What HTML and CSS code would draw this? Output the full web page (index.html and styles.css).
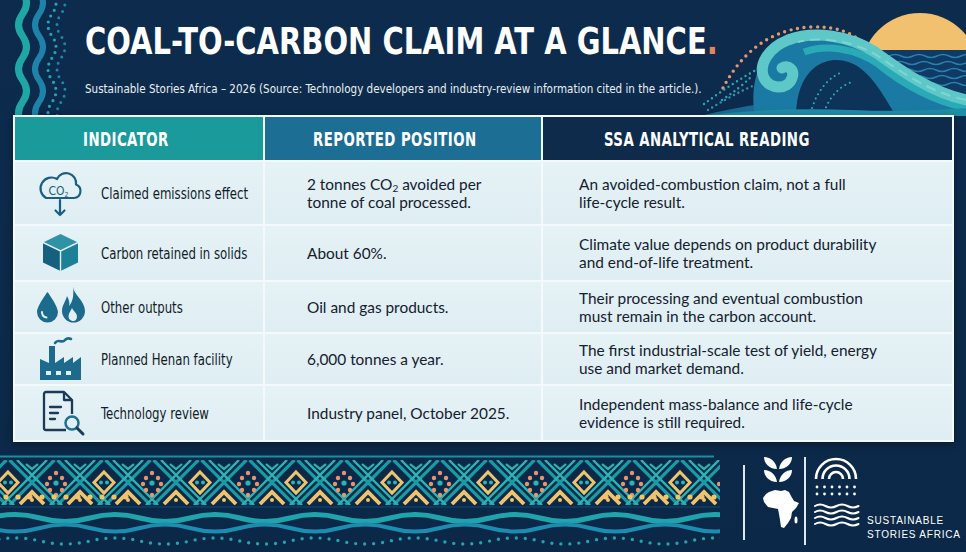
FILE: index.html
```html
<!DOCTYPE html>
<html lang="en">
<head>
<meta charset="utf-8">
<title>Coal-to-Carbon Claim at a Glance</title>
<link rel="stylesheet" href="styles.css">
</head>
<body>
<div class="page">
  <svg class="deco-left" width="75" height="116" viewBox="0 0 75 116">
    <g fill="none" stroke-linecap="round">
      <path d="M22.5 -8 Q30.5 3 22.5 14 T22.5 36 T22.5 58 T22.5 80 T22.5 102 T22.5 124" stroke="#1fa6a5" stroke-width="7"/>
      <path d="M39 -8 Q47 3 39 14 T39 36 T39 58 T39 80 T39 102 T39 124" stroke="#1f82a9" stroke-width="6"/>
      <path d="M52 -8 Q60 3 52 14 T52 36 T52 58 T52 80 T52 102 T52 124" stroke="#22a5b0" stroke-width="3.2" stroke-dasharray="0 6.5"/>
      <path d="M61 -8 Q69 3 61 14 T61 36 T61 58 T61 80 T61 102 T61 124" stroke="#1c87a8" stroke-width="3" stroke-dasharray="0 7"/>
    </g>
  </svg>

  <svg class="deco-wave" width="266" height="116" viewBox="0 0 266 116">
    <defs>
      <clipPath id="sky"><rect x="0" y="0" width="266" height="50"/></clipPath>
    </defs>
    <circle cx="220" cy="72" r="59" fill="#f2c170" clip-path="url(#sky)"/>
    <rect x="160" y="50" width="106" height="58" fill="#0f3a63"/>
    <g fill="none" stroke="#2a7fb0" stroke-width="1.4">
      <path d="M165 56 Q171 53 177 56 T189 56 T201 56 T213 56 T225 56 T237 56 T249 56 T261 56 T273 56"/>
      <path d="M170 63 Q176 60 182 63 T194 63 T206 63 T218 63 T230 63 T242 63 T254 63 T266 63"/>
      <path d="M176 70 Q182 67 188 70 T200 70 T212 70 T224 70 T236 70 T248 70 T260 70 T272 70"/>
      <path d="M188 77 Q194 74 200 77 T212 77 T224 77 T236 77 T248 77 T260 77 T272 77"/>
      <path d="M200 84 Q206 81 212 84 T224 84 T236 84 T248 84 T260 84 T272 84"/>
    </g>
    <path d="M23 88 C35 65 60 30 110 27 C135 26 152 32 164 44" fill="none" stroke="#e8996c" stroke-width="3.4" stroke-linecap="round" stroke-dasharray="0 6.6"/>
    <g fill="none" stroke-linecap="round" stroke-width="2.4">
      <path d="M4 104 C20 92 38 80 56 70" stroke="#2aa9b7" stroke-dasharray="0 5"/>
      <path d="M8 110 C24 100 42 90 62 82" stroke="#2a96b4" stroke-dasharray="0 5"/>
      <path d="M22 100 C34 92 44 84 52 76" stroke="#2aa9b7" stroke-dasharray="0 5"/>
    </g>
    <path d="M0 116 C40 106 80 100 120 100 C170 100 215 104 266 100 V116 Z" fill="#1a6a96"/>
    <path d="M55 116 C50 90 55 55 85 40 C115 28 150 35 180 58 C205 78 235 95 266 98 V116 Z" fill="#1b7aa3"/>
    <path d="M96 116 C96 95 102 78 114 68 C128 57 146 58 160 68 C176 80 186 100 196 116 Z" fill="#0e3358"/>
    <g fill="none" stroke-linecap="round" stroke-width="2" stroke-dasharray="0 5">
      <path d="M112 108 C118 90 128 78 142 72" stroke="#2fb3bd"/>
      <path d="M124 112 C130 96 140 86 152 82" stroke="#2fb3bd"/>
    </g>
    <path d="M266 108 C230 100 200 82 178 64 C155 48 125 44 104 52" fill="none" stroke="#2aa9b6" stroke-width="7"/>
    <path d="M266 100 C230 92 200 70 175 52 C150 36 115 30 88 40 C68 48 58 65 64 78 C70 90 88 90 92 78 C95 70 88 64 82 68" fill="none" stroke="#5ec8c8" stroke-width="11" stroke-linecap="round"/>
    <path d="M266 100 C232 93 204 74 178 56 C154 41 120 36 98 42" fill="none" stroke="#8fdcd6" stroke-width="2" stroke-dasharray="10 6" opacity=".7"/>
    <path d="M0 116 C50 110 100 108 150 110 C200 112 240 110 266 108 V116 Z" fill="#1f8fa8"/>
  </svg>

  <header class="head">
    <h1 class="title"><span>COAL-TO-CARBON CLAIM AT A GLANCE<em>.</em></span></h1>
    <p class="sub"><span>Sustainable Stories Africa – 2026 (Source: Technology developers and industry-review information cited in the article.).</span></p>
  </header>

  <div class="table">
    <div class="th th1"><span>INDICATOR</span></div>
    <div class="th th2"><span>REPORTED POSITION</span></div>
    <div class="th th3"><span>SSA ANALYTICAL READING</span></div>

    <div class="cell c1">
      <svg class="ico" width="48" height="48" viewBox="0 0 48 48">
        <path d="M10 29 H38 A7 7 0 0 0 40 15.5 A10 10 0 0 0 21 10 A8 8 0 0 0 10 29 Z" fill="none" stroke="#1b5f80" stroke-width="2.2" stroke-linejoin="round"/>
        <text x="12.5" y="25.5" class="co2">CO<tspan class="co2s" dy="2">2</tspan></text>
        <path d="M24 31 V46 M19.5 41.5 L24 46 L28.5 41.5" fill="none" stroke="#1b5f80" stroke-width="2.2" stroke-linecap="round" stroke-linejoin="round"/>
      </svg>
      <span class="lab"><span>Claimed emissions effect</span></span>
    </div>
    <div class="cell c2"><p>2 tonnes CO<sub>2</sub> avoided per<br>tonne of coal processed.</p></div>
    <div class="cell c3"><p>An avoided-combustion claim, not a full<br>life-cycle result.</p></div>

    <div class="cell c1">
      <svg class="ico" width="48" height="48" viewBox="0 0 48 48">
        <path d="M24.5 5 L42 13.5 L24.5 22 L7 13.5 Z" fill="#2f93a5"/>
        <path d="M7 13.5 L24.5 22 V42 L7 33.5 Z" fill="#14607e"/>
        <path d="M24.5 22 L42 13.5 V33.5 L24.5 42 Z" fill="#1d8096"/>
        <path d="M7 13.5 L24.5 22 L42 13.5 M24.5 22 V42" fill="none" stroke="#e2eff4" stroke-width="1.4"/>
      </svg>
      <span class="lab"><span>Carbon retained in solids</span></span>
    </div>
    <div class="cell c2"><p>About 60%.</p></div>
    <div class="cell c3"><p>Climate value depends on product durability<br>and end-of-life treatment.</p></div>

    <div class="cell c1">
      <svg class="ico" width="50" height="48" viewBox="0 0 50 48">
        <path d="M11.5 9 C11.5 9 1 23 1 29 A10.5 10.5 0 0 0 22 29 C22 23 11.5 9 11.5 9 Z" fill="#1c6a8c"/>
        <path d="M6 29 A5.5 5.5 0 0 0 10.5 34.5" fill="none" stroke="#e2eff4" stroke-width="2" stroke-linecap="round"/>
        <path d="M37 4 C38 12 49 18 49 28 A11.5 11.5 0 0 1 26 28 C26 22 30 18 31 13 C33 17 34 20 33 23 C37 19 38 11 37 4 Z" fill="#1c6a8c"/>
        <path d="M37.5 38 C34 38 32.5 35.5 32.5 33 C32.5 30 35 28 36 25 C37 28 41 30 41 33.5 C41 36 39.5 38 37.5 38 Z" fill="#e2eff4"/>
      </svg>
      <span class="lab"><span>Other outputs</span></span>
    </div>
    <div class="cell c2"><p>Oil and gas products.</p></div>
    <div class="cell c3"><p>Their processing and eventual combustion<br>must remain in the carbon account.</p></div>

    <div class="cell c1">
      <svg class="ico" width="48" height="48" viewBox="0 0 48 48">
        <path d="M4 45 V24 L13 28 V11 H19 V28 L28 22 V28 L37 22 V28 L45 22 V45 Z" fill="#1c6a8c"/>
        <path d="M19 8 C22 3 26 9 29 5 C31 3 33 3 35 4" fill="none" stroke="#1c6a8c" stroke-width="2.6" stroke-linecap="round"/>
        <rect x="10" y="36" width="5" height="4" fill="#e2eff4"/>
        <rect x="20" y="36" width="5" height="4" fill="#e2eff4"/>
        <rect x="30" y="36" width="5" height="4" fill="#e2eff4"/>
      </svg>
      <span class="lab"><span>Planned Henan facility</span></span>
    </div>
    <div class="cell c2"><p>6,000 tonnes a year.</p></div>
    <div class="cell c3"><p>The first industrial-scale test of yield, energy<br>use and market demand.</p></div>

    <div class="cell c1">
      <svg class="ico" width="50" height="48" viewBox="0 0 50 48">
        <path d="M30 41 H10 A2 2 0 0 1 8 39 V5 A2 2 0 0 1 10 3 H28 L36 11 V25" fill="none" stroke="#1a3a58" stroke-width="2.3" stroke-linejoin="round"/>
        <path d="M28 3 V11 H36" fill="none" stroke="#1a3a58" stroke-width="2.3" stroke-linejoin="round"/>
        <path d="M14 18 H25 M14 24 H22 M14 30 H19" fill="none" stroke="#1a3a58" stroke-width="2.3" stroke-linecap="round"/>
        <circle cx="36" cy="34" r="6.5" fill="none" stroke="#1f6f8f" stroke-width="2.5"/>
        <path d="M41 39 L47 45" stroke="#1a3a58" stroke-width="3" stroke-linecap="round"/>
      </svg>
      <span class="lab"><span>Technology review</span></span>
    </div>
    <div class="cell c2"><p>Industry panel, October 2025.</p></div>
    <div class="cell c3"><p>Independent mass-balance and life-cycle<br>evidence is still required.</p></div>
  </div>

  <footer class="foot">
    <svg class="band" width="720" height="97" viewBox="0 0 720 97">
      <defs>
        <pattern id="zz" x="32" y="5" width="96" height="45" patternUnits="userSpaceOnUse">
          <g fill="none">
            <path d="M-22.5 0 L22.5 45 M25.5 0 L70.5 45 M73.5 0 L118.5 45 M22.5 0 L-22.5 45 M70.5 0 L25.5 45 M118.5 0 L73.5 45" stroke="#1c9aa4" stroke-width="3.2"/>
            <path d="M-15 0 L30 45 M33 0 L78 45 M81 0 L126 45 M15 0 L-30 45 M63 0 L18 45 M111 0 L66 45" stroke="#2ab4b4" stroke-width="2.4"/>
            <path d="M-12 44 L0 32 L12 44 M36 44 L48 32 L60 44 M84 44 L96 32 L108 44" stroke="#f1c36c" stroke-width="3.8" stroke-linejoin="miter"/>
            <path d="M42 4 L48 9 L54 4 M-6 4 L0 9 L6 4 M90 4 L96 9 L102 4" stroke="#2ab4b4" stroke-width="2.2"/>
            <path d="M72 12 L82 22.5 L72 33 L62 22.5 Z" stroke="#f1c36c" stroke-width="3"/>
          </g>
          <g fill="#e8956a">
            <circle cx="24" cy="13" r="2.2"/><circle cx="18" cy="18" r="2.2"/><circle cx="30" cy="18" r="2.2"/>
            <circle cx="15" cy="24" r="2.2"/><circle cx="33" cy="24" r="2.2"/><circle cx="18" cy="30" r="2.2"/>
            <circle cx="30" cy="30" r="2.2"/><circle cx="24" cy="35" r="2.2"/>
          </g>
          <circle cx="24" cy="23" r="2.6" fill="#2ab4b4"/>
          <circle cx="69" cy="22.5" r="2" fill="#2ab4b4"/><circle cx="75" cy="22.5" r="2" fill="#2ab4b4"/>
          <circle cx="0" cy="40" r="2" fill="#f1c36c"/><circle cx="48" cy="40" r="2" fill="#f1c36c"/><circle cx="96" cy="40" r="2" fill="#f1c36c"/>
        </pattern>
      </defs>
      <line x1="0" y1="1.5" x2="714" y2="1.5" stroke="#1b8fa0" stroke-width="2"/>
      <rect x="0" y="5" width="720" height="45" fill="url(#zz)"/>
      <g fill="#f1c36c">
        <circle cx="6" cy="42" r="2.6"/><circle cx="18" cy="42" r="2.6"/><circle cx="30" cy="42" r="2.6"/><circle cx="42" cy="42" r="2.6"/>
        <circle cx="54" cy="42" r="2.6"/><circle cx="66" cy="42" r="2.6"/><circle cx="78" cy="42" r="2.6"/><circle cx="90" cy="42" r="2.6"/>
        <circle cx="102" cy="42" r="2.6"/><circle cx="114" cy="42" r="2.6"/><circle cx="126" cy="42" r="2.6"/>
        <circle cx="606" cy="42" r="2.6"/><circle cx="618" cy="42" r="2.6"/><circle cx="630" cy="42" r="2.6"/><circle cx="642" cy="42" r="2.6"/>
        <circle cx="654" cy="42" r="2.6"/><circle cx="666" cy="42" r="2.6"/><circle cx="678" cy="42" r="2.6"/><circle cx="690" cy="42" r="2.6"/>
        <circle cx="702" cy="42" r="2.6"/><circle cx="714" cy="42" r="2.6"/>
      </g>
      <line x1="0" y1="52" x2="720" y2="52" stroke="#154a6e" stroke-width="1"/>
      <g fill="none" stroke-linecap="round">
        <path d="M-10 63 Q15 56 40 63 T90 63 T140 63 T190 63 T240 63 T290 63 T340 63 T390 63 T440 63 T490 63 T540 63 T590 63 T640 63 T690 63 T740 63" stroke="#1fa4ab" stroke-width="5"/>
        <path d="M-10 73 Q15 80 40 73 T90 73 T140 73 T190 73 T240 73 T290 73 T340 73 T390 73 T440 73 T490 73 T540 73 T590 73 T640 73 T690 73 T740 73" stroke="#1b8db0" stroke-width="4"/>
        <path d="M-10 86 Q15 80 40 86 T90 86 T140 86 T190 86 T240 86 T290 86 T340 86 T390 86 T440 86 T490 86 T540 86 T590 86 T640 86 T690 86 T740 86" stroke="#22a3ad" stroke-width="3.4" stroke-dasharray="0 9"/>
      </g>
    </svg>

    <div class="logo">
      <div class="rule rule1"></div>
      <svg class="mark1" width="40" height="75" viewBox="0 0 40 75">
        <g fill="#ffffff">
          <path d="M16 12 C8 12 3 6 3 0 C10 0 15 5 16 12 Z"/>
          <path d="M18 12 C26 12 31 6 31 0 C24 0 19 5 18 12 Z"/>
          <path d="M16 25 C8 25 3 19 3 13 C10 13 15 18 16 25 Z"/>
          <path d="M18 25 C26 25 31 19 31 13 C24 13 19 18 18 25 Z"/>
          <g transform="translate(2 33)">
            <path d="M6 2 L12 0 L18 1 L22 0 L26 2 L28 6 L31 11 L36 13 L33 18 L29 22 L28 28 L25 33 L21 38 L18 37 L17 30 L16 24 L15 19 L10 18 L5 17 L1 12 L0 8 L3 4 Z"/>
            <ellipse cx="33" cy="30" rx="1.5" ry="3.5"/>
          </g>
        </g>
      </svg>
      <div class="rule rule2"></div>
      <svg class="mark2" width="46" height="75" viewBox="0 0 46 75">
        <g fill="none" stroke="#ffffff" stroke-width="2.6">
          <path d="M2 22 A20 20 0 0 1 42 22"/>
          <path d="M8.5 22 A13.5 13.5 0 0 1 35.5 22"/>
          <path d="M15 22 A7 7 0 0 1 29 22"/>
        </g>
        <g fill="#ffffff">
          <circle cx="3" cy="30" r="1.4"/><circle cx="10.5" cy="30" r="1.4"/><circle cx="18" cy="30" r="1.4"/><circle cx="25.5" cy="30" r="1.4"/><circle cx="33" cy="30" r="1.4"/><circle cx="40.5" cy="30" r="1.4"/>
          <circle cx="3" cy="37" r="1.4"/><circle cx="10.5" cy="37" r="1.4"/><circle cx="18" cy="37" r="1.4"/><circle cx="25.5" cy="37" r="1.4"/><circle cx="33" cy="37" r="1.4"/><circle cx="40.5" cy="37" r="1.4"/>
        </g>
        <g fill="none" stroke="#ffffff" stroke-width="2" stroke-linecap="round">
          <path d="M1 49 Q6 46 11.5 49 T22.5 49 T33.5 49 T44.5 49"/>
          <path d="M1 55 Q6 52 11.5 55 T22.5 55 T33.5 55 T44.5 55"/>
          <path d="M1 61 Q6 58 11.5 61 T22.5 61 T33.5 61 T44.5 61"/>
          <path d="M1 67 Q6 64 11.5 67 T22.5 67 T33.5 67 T44.5 67"/>
        </g>
      </svg>
      <p class="brand">SUSTAINABLE<br>STORIES AFRICA</p>
    </div>
  </footer>
</div>
</body>
</html>
```

FILE: styles.css
```css
* { box-sizing: border-box; margin: 0; padding: 0; }

html, body {
  width: 966px;
  height: 552px;
  overflow: hidden;
}

body {
  background: #0c2a4a;
  font-family: "Lato", "DejaVu Sans", sans-serif;
  color: #15202e;
}

.page {
  position: relative;
  width: 966px;
  height: 552px;
  display: flex;
  flex-direction: column;
  background: linear-gradient(180deg, #0d2c4d 0%, #0b2848 100%);
}

.deco-left {
  position: absolute;
  left: 0;
  top: 0;
}

.deco-wave {
  position: absolute;
  right: 0;
  top: 0;
}

/* Header */
.head {
  position: relative;
  z-index: 1;
  height: 115px;
  padding: 22px 0 0 85px;
}

.title {
  font-family: "DejaVu Sans Condensed", "DejaVu Sans", sans-serif;
  font-weight: 700;
  font-size: 38px;
  line-height: 38px;
  color: #ffffff;
  white-space: nowrap;
}

.title span {
  display: inline-block;
  transform: scaleX(0.848);
  transform-origin: 0 50%;
}

.title em {
  font-style: normal;
  color: #e8845a;
}

.sub {
  margin-top: 22px;
  font-family: "DejaVu Sans Condensed", "DejaVu Sans", sans-serif;
  font-size: 12px;
  line-height: 14px;
  color: #e8eff5;
  white-space: nowrap;
}

.sub span {
  display: inline-block;
  transform: scaleX(0.96);
  transform-origin: 0 50%;
}

/* Table */
.table {
  position: relative;
  z-index: 1;
  margin-left: 13px;
  width: 941px;
  display: grid;
  grid-template-columns: 248px 276px 409px;
  grid-template-rows: 43px 62px 54px 50px 50px 54px;
  gap: 2px;
  padding: 2px;
  background: #f4f9fb;
  box-shadow: 0 2px 8px rgba(0, 0, 0, 0.35);
}

.th {
  display: flex;
  align-items: center;
  color: #ffffff;
  font-family: "DejaVu Sans Condensed", "DejaVu Sans", sans-serif;
  font-weight: 700;
  font-size: 20px;
  letter-spacing: 0.6px;
  white-space: nowrap;
}

.th span {
  display: inline-block;
  transform: scaleX(0.74);
  transform-origin: 0 50%;
}

.th1 { background: #1b9a9b; padding-left: 68px; }
.th2 { background: #1c6e94; padding-left: 48px; }
.th3 { background: #0f2b4b; padding-left: 61px; }

.cell {
  display: flex;
  align-items: center;
  background: linear-gradient(180deg, #e5f2f6 0%, #dfeef3 100%);
}

.c1 { padding-left: 21px; }
.c2 { padding-left: 42px; }
.c3 { padding-left: 36px; }

.ico {
  flex: none;
  display: block;
}

.c1 .ico[width="48"] { margin-right: 17px; }
.c1 .ico[width="50"] { margin-right: 15px; }

.co2 {
  font-family: "DejaVu Sans Condensed", "DejaVu Sans", sans-serif;
  font-size: 12px;
  fill: #1b5f80;
}

.co2s { font-size: 7px; }

.lab {
  font-family: "DejaVu Sans Condensed", "DejaVu Sans", sans-serif;
  font-size: 16.5px;
  color: #111b28;
  white-space: nowrap;
}

.lab span {
  display: inline-block;
  transform: scaleX(0.79);
  transform-origin: 0 50%;
}

.c2 p, .c3 p {
  font-family: "Lato", "DejaVu Sans", sans-serif;
  font-size: 15.4px;
  line-height: 18px;
  color: #14202d;
  white-space: nowrap;
}

sub {
  font-size: 10px;
  vertical-align: -2px;
  line-height: 0;
}

/* Footer */
.foot {
  display: flex;
  align-items: flex-start;
}

.band {
  flex: none;
  display: block;
  margin-top: 13px;
}

.logo {
  display: flex;
  align-items: flex-start;
  margin-left: 23px;
  margin-top: 15px;
}

.rule {
  flex: none;
  width: 2px;
  background: #dde7ee;
}

.rule1 { height: 75px; margin-top: 8px; }
.rule2 { height: 88px; margin-left: 3px; }

.mark1 { flex: none; display: block; margin-left: 16px; }
.mark2 { flex: none; display: block; margin-left: 8px; }

.brand {
  margin-left: 7px;
  margin-top: 57px;
  font-family: "Liberation Sans", "DejaVu Sans", sans-serif;
  font-size: 10px;
  line-height: 14px;
  letter-spacing: 0.8px;
  color: #ffffff;
  white-space: nowrap;
}
```
